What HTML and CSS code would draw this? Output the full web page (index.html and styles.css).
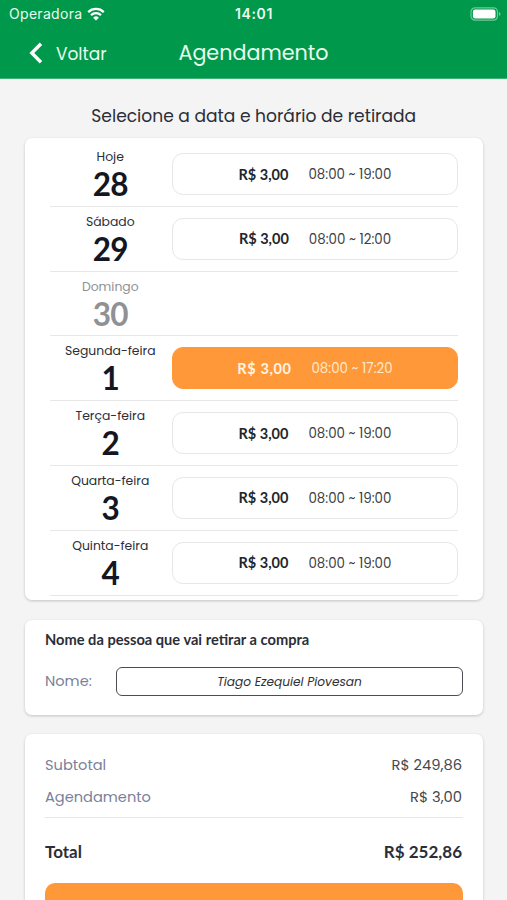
FILE: index.html
```html
<!DOCTYPE html>
<html lang="pt-BR">
<head>
  <meta charset="UTF-8" />
  <meta name="viewport" content="width=device-width, initial-scale=1" />
  <title>Agendamento</title>
  <link rel="stylesheet" href="styles.css">
</head>
<body>
  <header>
    <div class="status-bar">
      <div class="carrier">
        <span>Operadora</span>
        <svg class="wifi" viewBox="0 0 18 14" width="18" height="14">
          <path d="M1.2 5.1a11.2 11.2 0 0 1 15.6 0" />
          <path d="M4 8.1a7.2 7.2 0 0 1 10 0" />
          <path class="wifi-dot" d="M9 13.6L6.1 10.7a4.1 4.1 0 0 1 5.8 0z" />
        </svg>
      </div>
      <span class="clock">14:01</span>
      <div class="battery">
        <svg viewBox="0 0 31 14" width="31" height="14">
          <rect class="battery-case" x="1" y="0.8" width="26.5" height="12.4" rx="4" />
          <rect class="battery-level" x="2.9" y="2.6" width="22.6" height="8.8" rx="2.2" />
          <path class="battery-tip" d="M29 5q1.5 .5 1.5 2t-1.5 2z" />
        </svg>
      </div>
    </div>
    <nav>
      <a class="back" href="#">
        <svg viewBox="0 0 14 22" width="14" height="22"><path d="M12 1.8L2.8 11l9.2 9.2" /></svg>
        <span>Voltar</span>
      </a>
      <h1>Agendamento</h1>
    </nav>
  </header>

  <main>
    <h2>Selecione a data e horário de retirada</h2>

    <section class="card schedule">
      <div class="day-row">
        <div class="day"><span class="weekday">Hoje</span><strong>28</strong></div>
        <button class="slot"><b>R$ 3,00</b><span>08:00 ~ 19:00</span></button>
      </div>
      <div class="day-row">
        <div class="day"><span class="weekday">Sábado</span><strong>29</strong></div>
        <button class="slot"><b>R$ 3,00</b><span>08:00 ~ 12:00</span></button>
      </div>
      <div class="day-row">
        <div class="day disabled"><span class="weekday">Domingo</span><strong>30</strong></div>
      </div>
      <div class="day-row">
        <div class="day"><span class="weekday">Segunda-feira</span><strong>1</strong></div>
        <button class="slot selected"><b>R$ 3,00</b><span>08:00 ~ 17:20</span></button>
      </div>
      <div class="day-row">
        <div class="day"><span class="weekday">Terça-feira</span><strong>2</strong></div>
        <button class="slot"><b>R$ 3,00</b><span>08:00 ~ 19:00</span></button>
      </div>
      <div class="day-row">
        <div class="day"><span class="weekday">Quarta-feira</span><strong>3</strong></div>
        <button class="slot"><b>R$ 3,00</b><span>08:00 ~ 19:00</span></button>
      </div>
      <div class="day-row">
        <div class="day"><span class="weekday">Quinta-feira</span><strong>4</strong></div>
        <button class="slot"><b>R$ 3,00</b><span>08:00 ~ 19:00</span></button>
      </div>
    </section>

    <section class="card person">
      <h3>Nome da pessoa que vai retirar a compra</h3>
      <div class="field">
        <label for="nome">Nome:</label>
        <input id="nome" type="text" value="Tiago Ezequiel Piovesan" />
      </div>
    </section>

    <section class="card summary">
      <div class="line"><span class="label">Subtotal</span><span class="value">R$ 249,86</span></div>
      <div class="line"><span class="label">Agendamento</span><span class="value">R$ 3,00</span></div>
      <div class="total"><span>Total</span><span>R$ 252,86</span></div>
      <button class="confirm" aria-label="Confirmar"></button>
    </section>
  </main>
</body>
</html>
```
FILE: styles.css
```css
* { margin: 0; padding: 0; box-sizing: border-box; }
body {
  height: 900px;
  overflow: hidden;
  font-family: Poppins, Inter, sans-serif;
  background: #f4f4f4;
  color: #2b2e38;
}
header {
  height: 79px;
  background: #00984b;
  border-bottom: 1px solid #3fb377;
  color: #e9fbee;
}
.status-bar {
  display: grid;
  grid-template-columns: 1fr auto 1fr;
  align-items: center;
  height: 27px;
  padding: 0 6px 0 9px;
  font-family: Inter, sans-serif;
  font-size: 14px;
}
.carrier {
  display: flex;
  align-items: center;
  gap: 5px;
  letter-spacing: 0.3px;
}
.wifi {
  fill: none;
  stroke: #fff;
  stroke-width: 2.2;
}
.wifi .wifi-dot {
  fill: #fff;
  stroke: none;
}
.clock {
  padding-right: 2px;
  font-weight: 600;
  letter-spacing: 0.6px;
}
.battery {
  display: flex;
  justify-content: flex-end;
}
.battery-case {
  fill: none;
  stroke: #72c799;
  stroke-width: 1.2;
}
.battery-level { fill: #fff; }
.battery-tip { fill: #72c799; }
nav {
  display: grid;
  grid-template-columns: 1fr auto 1fr;
  align-items: center;
  height: 51px;
}
.back {
  display: flex;
  align-items: center;
  gap: 13px;
  padding-left: 29px;
  font-size: 17px;
  color: inherit;
  text-decoration: none;
}
.back span { padding-top: 3px; }
.back svg {
  fill: none;
  stroke: #fff;
  stroke-width: 3.4;
}
h1 {
  font-size: 20.7px;
  font-weight: 400;
}
main {
  padding: 0 24.5px 0 25px;
}
h2 {
  height: 59px;
  line-height: 74px;
  text-align: center;
  font-size: 17.1px;
  font-weight: 400;
}
.card {
  background: #fff;
  border-radius: 7px;
  box-shadow: 0 1px 3px rgba(0, 0, 0, 0.2);
}
.schedule {
  height: 462px;
  padding: 4px 24.5px 0;
}
.day-row {
  display: flex;
  height: 64.8px;
  border-bottom: 1.5px solid #e7e7e8;
}
.day {
  display: flex;
  flex-direction: column;
  align-items: center;
  width: 121.5px;
  margin-right: 1px;
  padding-top: 5px;
}
.weekday {
  font-size: 12.4px;
  line-height: 19px;
}
.day strong {
  font-family: Lato, sans-serif;
  font-size: 31.5px;
  line-height: 36px;
  letter-spacing: -0.8px;
  color: #141721;
}
.disabled, .disabled strong { color: #8f9194; }
.slot {
  display: flex;
  align-items: center;
  justify-content: center;
  gap: 20px;
  flex: 1;
  height: 42px;
  margin-top: 11px;
  background: #fff;
  border: 1.5px solid #e7e7e9;
  border-radius: 11px;
  font-family: inherit;
  font-size: 13.4px;
  color: #3c3e43;
}
.slot span { padding-top: 2px; }
.slot b {
  font-family: Lato, sans-serif;
  font-size: 14.5px;
  color: #22262b;
}
.slot.selected {
  background: #ff9838;
  border-color: #ff9838;
  color: #ffe9cc;
}
.slot.selected b {
  letter-spacing: 0.6px;
  color: #fff4e4;
}
.person {
  height: 95px;
  margin-top: 19.5px;
  padding: 10px 19.5px 0 20px;
}
h3 {
  font-family: Lato, sans-serif;
  font-size: 14.65px;
  line-height: 20px;
}
.field {
  display: flex;
  align-items: center;
  justify-content: space-between;
  margin-top: 17px;
}
.label, label {
  color: #7b819a;
  font-size: 14.6px;
}
.field input {
  width: 347px;
  height: 29px;
  padding-top: 1px;
  border: 1.5px solid #4b4d52;
  border-radius: 6px;
  background: #fff;
  text-align: center;
  font-family: inherit;
  font-size: 12.2px;
  font-style: italic;
  color: #2f3135;
}
.summary {
  height: 220px;
  margin-top: 19.5px;
  padding: 15px 19.5px 0 20px;
}
.line {
  display: flex;
  align-items: center;
  justify-content: space-between;
  height: 32px;
}
.value {
  padding-right: 1px;
  font-size: 14.7px;
  color: #45474b;
}
.total {
  display: flex;
  align-items: center;
  justify-content: space-between;
  height: 66px;
  margin-top: 4px;
  padding: 2px 1px 0 0;
  border-top: 1.5px solid #e6e6e9;
  font-family: Lato, sans-serif;
  font-size: 17px;
  font-weight: 700;
}
.confirm {
  display: block;
  width: 100%;
  height: 46px;
  border: none;
  border-radius: 10px;
  background: #ff9838;
}
```
